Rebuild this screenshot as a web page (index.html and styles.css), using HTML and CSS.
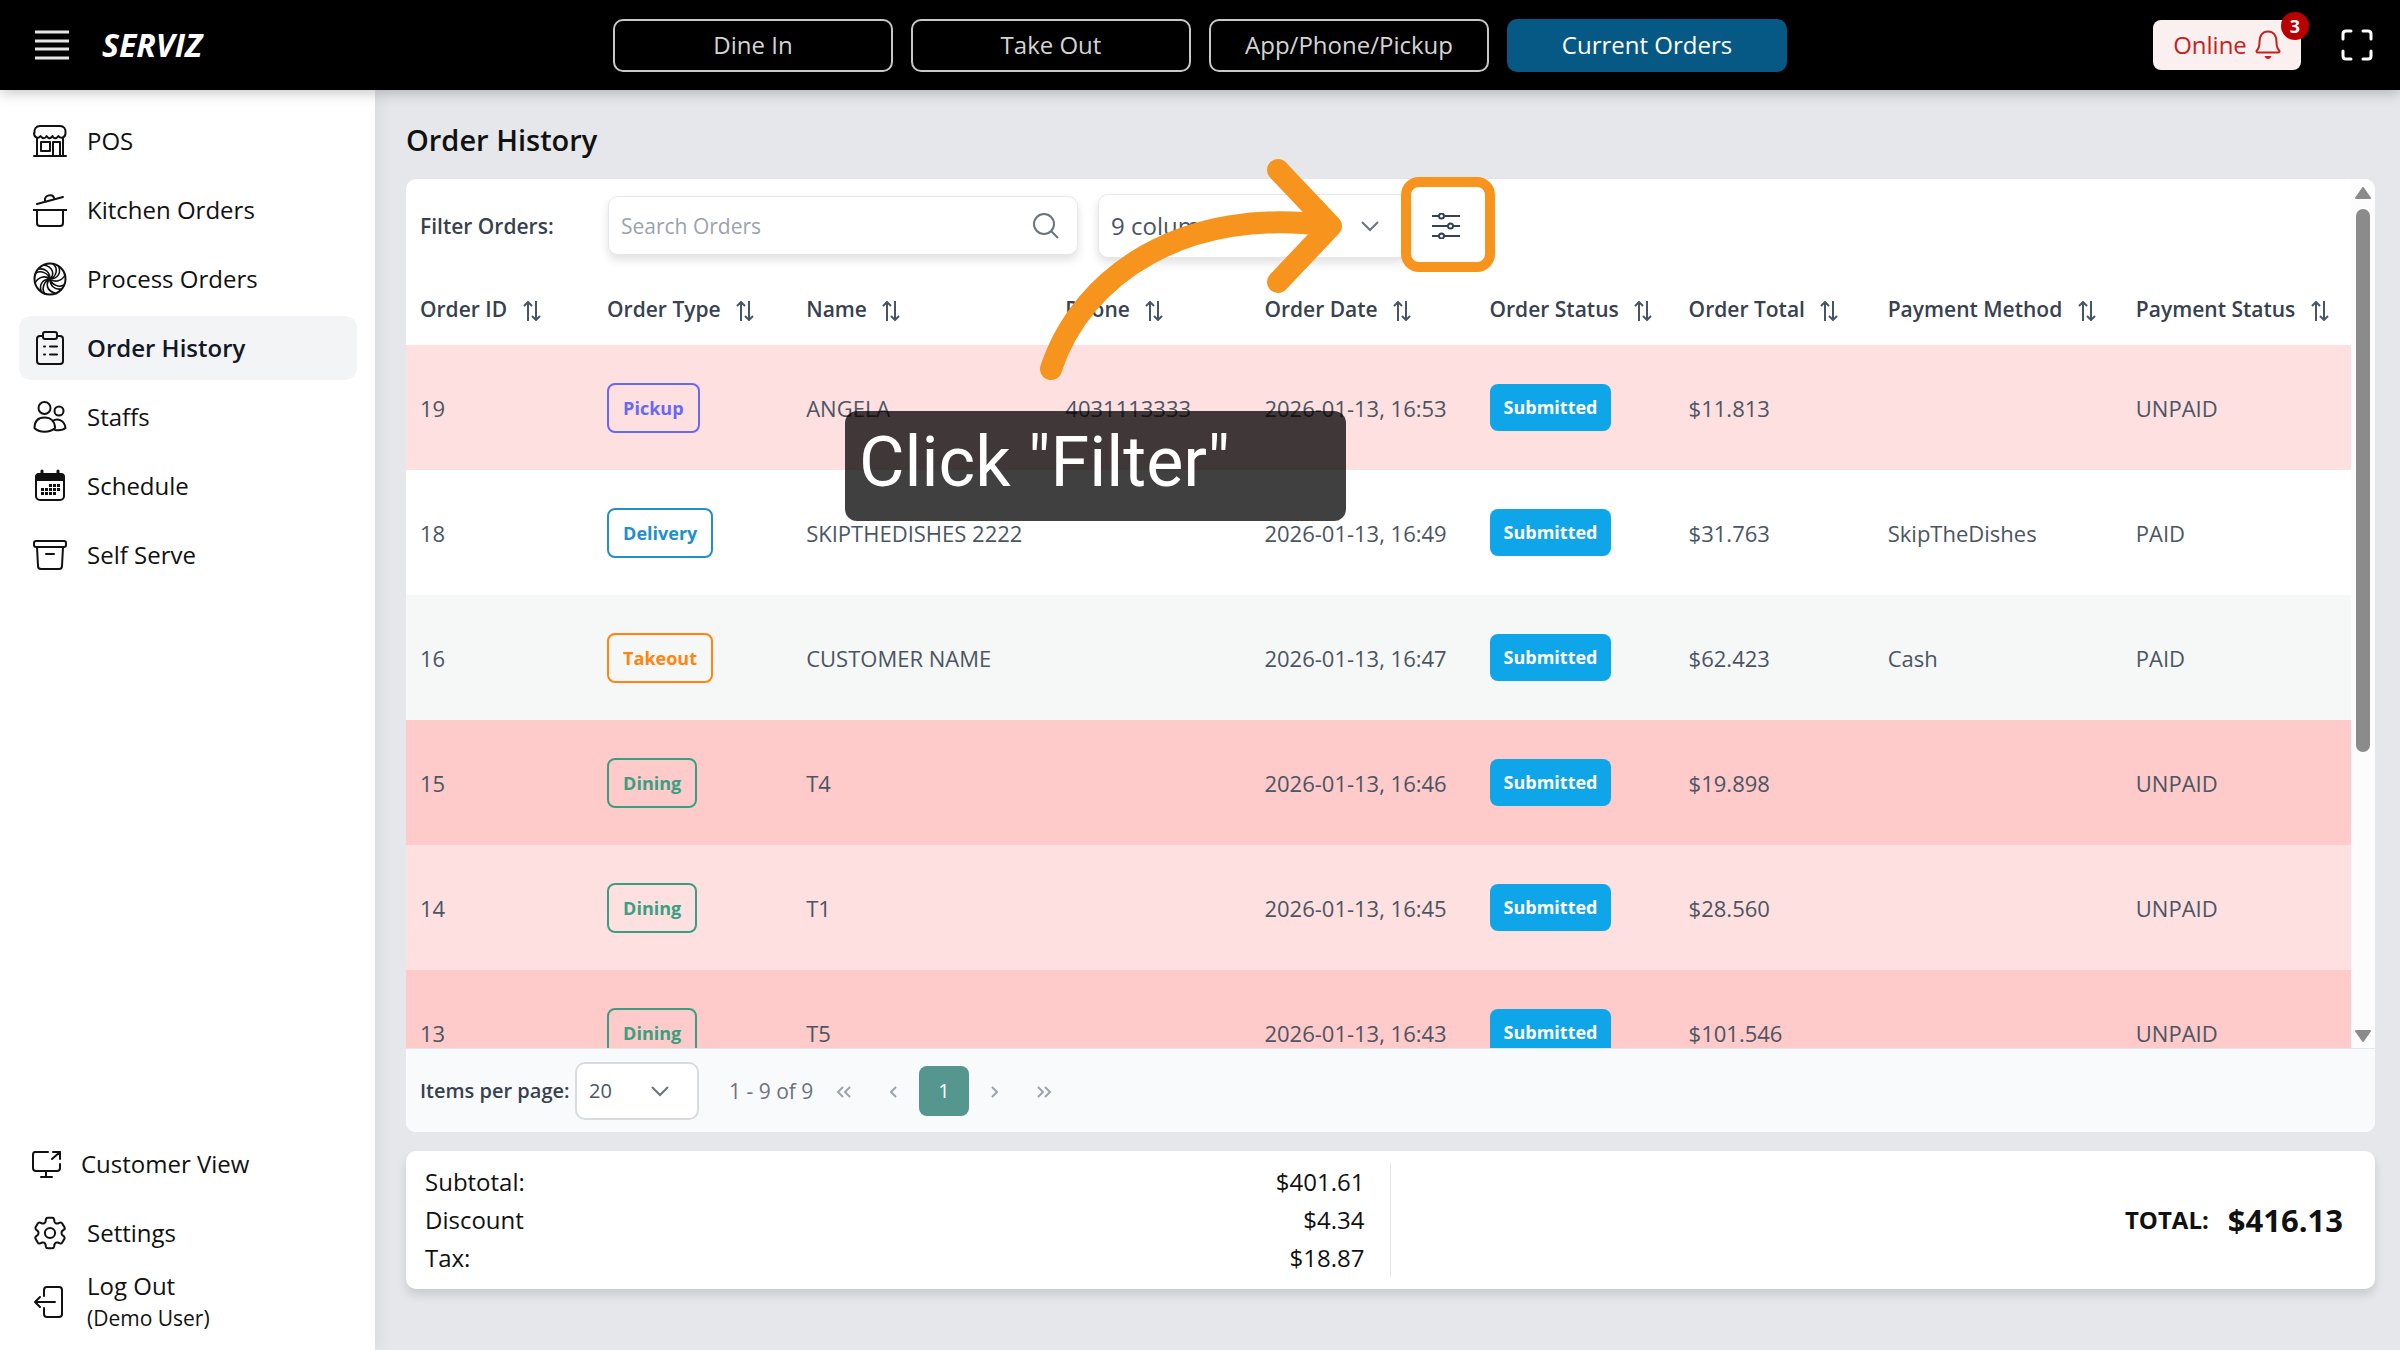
FILE: index.html
```html
<!DOCTYPE html>
<html lang="en">
<head>
    <meta charset="UTF-8">
    <meta name="viewport" content="width=device-width, initial-scale=1.0">
    <title>Order History - Serviz</title>
    <link rel="stylesheet" href="styles.css">
</head>
<body>
    <!-- shared icons -->
    <svg class="sprite" aria-hidden="true">
        <symbol id="sort" viewBox="0 0 18 20">
            <path d="M5 20V1M1 5l4-4 4 4M13 0v19M9 15l4 4 4-4"/>
        </symbol>
        <symbol id="chevron" viewBox="0 0 18 12">
            <path d="M1 2l8 8 8-8"/>
        </symbol>
    </svg>

    <header class="topbar">
        <div class="brand">
            <button class="icon-btn" aria-label="Menu">
                <svg width="34" height="30" viewBox="0 0 34 30"><path d="M0 2h34M0 11h34M0 19h34M0 28h34"/></svg>
            </button>
            <a href="#" class="logo">SERVIZ</a>
        </div>
        <nav class="modes">
            <button>Dine In</button>
            <button>Take Out</button>
            <button>App/Phone/Pickup</button>
            <button class="active">Current Orders</button>
        </nav>
        <div class="tools">
            <button class="online">
                Online
                <svg width="26" height="30" viewBox="0 0 26 30"><path d="M1.500 21c2-2 3-4 3-9C4.500 5 8 1.500 13 1.500S21.500 5 21.500 12c0 5 1 7 3 9q0 1.500-1.500 1.500H3Q1.500 22.500 1.500 21z"/><path class="clapper" d="M9.500 26h7q-1 3-3.500 3t-3.500-3z"/></svg>
                <span class="count">3</span>
            </button>
            <button class="icon-btn" aria-label="Full screen">
                <svg width="32" height="32" viewBox="0 0 32 32"><path d="M2 10V5q0-3 3-3h5M22 2h5q3 0 3 3v5M30 22v5q0 3-3 3h-5M10 30H5q-3 0-3-3v-5"/></svg>
            </button>
        </div>
    </header>

    <div class="layout">
        <aside class="sidebar">
            <nav class="menu">
                <a href="#">
                    <svg viewBox="0 0 34 34"><path d="M1.500 9C1 5 3 2 7 2h20c4 0 6 3 5.500 7 0 5-5 6-7 3-2 3-5 3-6 0-2 3-4 3-6 0-1 3-4 3-6 0-2 3-6.500 2-6.500-3zM4 14v18M30 14v18M1 32h32M8 18h9v9H8zM20 32V18h7v14"/></svg>
                    POS
                </a>
                <a href="#">
                    <svg viewBox="0 0 34 34"><path d="M4 11l26-7M12 8c-1-6 8-8 9-3M0 17h34M4 17v13q0 3 3 3h20q3 0 3-3V17"/></svg>
                    Kitchen Orders
                </a>
                <a href="#">
                    <svg viewBox="0 0 34 34"><circle cx="17" cy="17" r="15.500"/><path d="M17 17C22 12 20 5 11 3M17 17C23 15 26 7 20 2M17 17c7 0 11-5 9-12M17 17c5 4 12 2 15-4M17 17c2 6 9 9 14 6M17 17c0 7 5 11 11 10M17 17c-5 5-3 12 5 14M17 17c-6 2-9 10-5 15M17 17c-7 0-11 5-9 12M17 17c-5-4-12-2-15 4M17 17C15 11 8 8 3 11M17 17C17 10 12 6 6 7" stroke-width="1.600"/></svg>
                    Process Orders
                </a>
                <a href="#" class="active">
                    <svg viewBox="0 0 34 34"><path d="M10 5H7Q4 5 4 8v22q0 3 3 3h20q3 0 3-3V8q0-3-3-3h-3M12 1h10q2 0 2 2v3q0 2-2 2H12q-2 0-2-2V3q0-2 2-2zM11 15.500h1M17 15.500h7M11 23.500h1M17 23.500h7"/></svg>
                    Order History
                </a>
                <a href="#">
                    <svg viewBox="0 0 34 34"><circle cx="11.500" cy="8" r="6"/><circle cx="26" cy="11" r="4.500"/><path d="M1.500 28c0-7 4-10.500 10-10.500S22 21 22 28c-5 5-16 5-20.500 0zM19.500 21c5-3 12-1 13 7-2 2-6 2.500-10.500 2"/></svg>
                    Staffs
                </a>
                <a href="#">
                    <svg viewBox="0 0 34 34"><rect x="3" y="5" width="28" height="26" rx="4"/><path d="M3 11V8q0-3 3-3h22q3 0 3 3v3z" fill="#111"/><path d="M9 2v4M25 2v4" stroke-width="3"/><path class="dots" d="M16 16.500h11M8 20.500h19M8 24.500h15"/></svg>
                    Schedule
                </a>
                <a href="#">
                    <svg viewBox="0 0 34 34"><rect x="1" y="3" width="32" height="6" rx="2"/><path d="M4 9l1 19q0 3 3 3h18q3 0 3-3l1-19M13 16h8"/></svg>
                    Self Serve
                </a>
            </nav>
            <nav class="menu menu-bottom">
                <a href="#" class="tight">
                    <svg viewBox="0 0 34 34"><path d="M19 5H6Q4 5 4 8v13q0 3 3 3h21q3 0 3-3v-4M17 24v6M12 30h11M23 12l8-7M24 5h7v7"/></svg>
                    Customer View
                </a>
                <a href="#">
                    <svg viewBox="2 2 20 20" class="gear"><path d="M9.600 3.900c.1-.5.500-.9 1.100-.9h2.600c.6 0 1 .4 1.100.9l.2 1.300c.1.400.3.700.6.900l.3.200c.3.200.7.200 1.100.1l1.200-.5c.5-.2 1.100 0 1.400.5l1.300 2.200c.3.500.2 1.100-.3 1.400l-1 .8c-.3.300-.4.600-.4 1v.4c0 .4.100.7.400 1l1 .8c.4.400.5.900.3 1.400l-1.300 2.200c-.3.500-.9.700-1.400.5l-1.200-.5c-.4-.1-.8-.1-1.100.1l-.3.200c-.3.200-.5.500-.6.900l-.2 1.300c-.1.500-.5.900-1.100.9h-2.600c-.6 0-1-.4-1.100-.9l-.2-1.300c-.1-.4-.3-.7-.6-.9l-.3-.2c-.3-.2-.7-.2-1.100-.1l-1.200.5c-.5.200-1.100 0-1.400-.5L3.500 15.400c-.3-.5-.2-1.100.3-1.400l1-.8c.3-.3.400-.6.400-1v-.4c0-.4-.1-.7-.4-1l-1-.8c-.4-.4-.5-.9-.3-1.400l1.300-2.200c.3-.5.900-.7 1.400-.5l1.200.5c.4.100.8.100 1.100-.1l.3-.2c.3-.2.5-.5.600-.9z"/><circle cx="12" cy="12" r="3"/></svg>
                    Settings
                </a>
                <a href="#" class="logout">
                    <svg viewBox="0 0 34 34"><path d="M11 11V5q0-3 3-3h12q3 0 3 3v24q0 3-3 3H14q-3 0-3-3v-6M22 17H2M7 12l-5 5 5 5"/></svg>
                    <span>Log Out <small>(Demo User)</small></span>
                </a>
            </nav>
        </aside>

        <main>
            <h1>Order History</h1>
            <section class="card orders">
                <div class="scroll-area">
                    <div class="scroll-view">
                        <div class="filters">
                            <label for="search">Filter Orders:</label>
                            <div class="search">
                                <input type="text" id="search" placeholder="Search Orders">
                                <svg width="26" height="26" viewBox="0 0 26 26"><circle cx="11" cy="11" r="10"/><path d="M18 18l7 7"/></svg>
                            </div>
                            <div class="select columns">
                                <select aria-label="Columns"><option>9 columns</option></select>
                                <svg width="18" height="12"><use href="#chevron"/></svg>
                            </div>
                            <button class="filter-btn" aria-label="Filter">
                                <svg width="28" height="26" viewBox="0 0 28 26"><path d="M0 3h7M12 3h16M0 13h16M21 13h7M0 23h7M12 23h16"/><circle cx="9.500" cy="3" r="2.500"/><circle cx="18.500" cy="13" r="2.500"/><circle cx="9.500" cy="23" r="2.500"/></svg>
                            </button>
                        </div>
                        <table>
                            <colgroup>
                                <col class="c-id"><col class="c-md"><col class="c-name"><col class="c-md"><col class="c-date"><col class="c-md"><col class="c-md"><col class="c-method"><col class="c-pay">
                            </colgroup>
                            <thead>
                                <tr>
                                    <th>Order ID <svg><use href="#sort"/></svg></th>
                                    <th>Order Type <svg><use href="#sort"/></svg></th>
                                    <th>Name <svg><use href="#sort"/></svg></th>
                                    <th>Phone <svg><use href="#sort"/></svg></th>
                                    <th>Order Date <svg><use href="#sort"/></svg></th>
                                    <th>Order Status <svg><use href="#sort"/></svg></th>
                                    <th>Order Total <svg><use href="#sort"/></svg></th>
                                    <th>Payment Method <svg><use href="#sort"/></svg></th>
                                    <th>Payment Status <svg><use href="#sort"/></svg></th>
                                </tr>
                            </thead>
                            <tbody>
                                <tr class="unpaid">
                                    <td>19</td>
                                    <td><span class="tag pickup">Pickup</span></td>
                                    <td>ANGELA</td>
                                    <td>4031113333</td>
                                    <td>2026-01-13, 16:53</td>
                                    <td><span class="status">Submitted</span></td>
                                    <td>$11.813</td>
                                    <td></td>
                                    <td>UNPAID</td>
                                </tr>
                                <tr>
                                    <td>18</td>
                                    <td><span class="tag delivery">Delivery</span></td>
                                    <td>SKIPTHEDISHES 2222</td>
                                    <td></td>
                                    <td>2026-01-13, 16:49</td>
                                    <td><span class="status">Submitted</span></td>
                                    <td>$31.763</td>
                                    <td>SkipTheDishes</td>
                                    <td>PAID</td>
                                </tr>
                                <tr class="striped">
                                    <td>16</td>
                                    <td><span class="tag takeout">Takeout</span></td>
                                    <td>CUSTOMER NAME</td>
                                    <td></td>
                                    <td>2026-01-13, 16:47</td>
                                    <td><span class="status">Submitted</span></td>
                                    <td>$62.423</td>
                                    <td>Cash</td>
                                    <td>PAID</td>
                                </tr>
                                <tr class="unpaid striped">
                                    <td>15</td>
                                    <td><span class="tag dining">Dining</span></td>
                                    <td>T4</td>
                                    <td></td>
                                    <td>2026-01-13, 16:46</td>
                                    <td><span class="status">Submitted</span></td>
                                    <td>$19.898</td>
                                    <td></td>
                                    <td>UNPAID</td>
                                </tr>
                                <tr class="unpaid">
                                    <td>14</td>
                                    <td><span class="tag dining">Dining</span></td>
                                    <td>T1</td>
                                    <td></td>
                                    <td>2026-01-13, 16:45</td>
                                    <td><span class="status">Submitted</span></td>
                                    <td>$28.560</td>
                                    <td></td>
                                    <td>UNPAID</td>
                                </tr>
                                <tr class="unpaid striped">
                                    <td>13</td>
                                    <td><span class="tag dining">Dining</span></td>
                                    <td>T5</td>
                                    <td></td>
                                    <td>2026-01-13, 16:43</td>
                                    <td><span class="status">Submitted</span></td>
                                    <td>$101.546</td>
                                    <td></td>
                                    <td>UNPAID</td>
                                </tr>
                            </tbody>
                        </table>
                    </div>
                    <div class="scrollbar">
                        <svg width="16" height="12" viewBox="0 0 16 12"><path d="M8 1l7 10H1z"/></svg>
                        <div class="track"><div class="thumb"></div></div>
                        <svg width="16" height="12" viewBox="0 0 16 12"><path d="M8 11l7-10H1z"/></svg>
                    </div>
                </div>
                <div class="paginator">
                    <label for="per-page">Items per page:</label>
                    <div class="select per-page">
                        <select id="per-page"><option>20</option></select>
                        <svg width="18" height="12"><use href="#chevron"/></svg>
                    </div>
                    <span class="range">1 - 9 of 9</span>
                    <div class="pages">
                        <button aria-label="First page"><svg width="16" height="12" viewBox="0 0 16 12"><path d="M7 1L2 6l5 5M14 1L9 6l5 5"/></svg></button>
                        <button aria-label="Previous page"><svg width="8" height="12" viewBox="0 0 8 12"><path d="M6 1L1 6l5 5"/></svg></button>
                        <button class="current">1</button>
                        <button aria-label="Next page"><svg width="8" height="12" viewBox="0 0 8 12"><path d="M2 1l5 5-5 5"/></svg></button>
                        <button aria-label="Last page"><svg width="16" height="12" viewBox="0 0 16 12"><path d="M2 1l5 5-5 5M9 1l5 5-5 5"/></svg></button>
                    </div>
                </div>
            </section>

            <section class="card summary">
                <dl>
                    <div><dt>Subtotal:</dt><dd>$401.61</dd></div>
                    <div><dt>Discount</dt><dd>$4.34</dd></div>
                    <div><dt>Tax:</dt><dd>$18.87</dd></div>
                </dl>
                <p class="total">TOTAL: <span class="amount">$416.13</span></p>
            </section>

            <!-- walkthrough step -->
            <div class="spotlight"></div>
            <svg class="arrow" width="320" height="250" viewBox="0 0 320 250">
                <path d="M21 221C52 127 155 57 301 78M248 22l53 56-53 56"/>
            </svg>
            <div class="hint">Click "Filter"</div>
        </main>
    </div>
</body>
</html>
```

FILE: styles.css
```css
* { margin: 0; padding: 0; box-sizing: border-box; }
body {
    font-family: "Open Sans", "Noto Sans", sans-serif;
    font-size: 24px;
    line-height: 32px;
    color: #111;
    background: #e5e7eb;
    min-height: 100vh;
    display: flex;
    flex-direction: column;
}
button, input, select {
    font: inherit;
    color: inherit;
    background: none;
    border: none;
}
a { color: inherit; text-decoration: none; }
svg { flex: none; fill: none; stroke: #6b7280; stroke-width: 2; }
.sprite { display: none; }
/* symbols take their stroke from the svg that uses them */
symbol { stroke: inherit; }

/* top bar */
.topbar {
    display: grid;
    grid-template-columns: 1fr auto 1fr;
    align-items: center;
    height: 90px;
    padding: 0 27px;
    background: #000;
    color: #fff;
    box-shadow: 0 4px 12px rgba(0, 0, 0, 0.2);
    position: relative;
    z-index: 2;
}
.icon-btn { display: flex; }
.icon-btn svg { stroke: #fff; stroke-width: 3; stroke-linecap: round; }
.brand { display: flex; align-items: center; gap: 33px; padding-left: 8px; }
.brand svg { stroke: #e5e5e5; stroke-linecap: butt; }
.logo { font-size: 32px; font-weight: 700; font-style: italic; }
.modes { display: flex; gap: 18px; }
.modes button {
    width: 280px;
    height: 53px;
    border: 2px solid #c8c8c8;
    border-radius: 10px;
    color: #d4d4d4;
}
.modes .active {
    background: #075985;
    border-color: #075985;
    color: #fff;
}
.tools { display: flex; justify-content: flex-end; align-items: center; gap: 40px; }
.online {
    position: relative;
    display: flex;
    align-items: center;
    justify-content: center;
    gap: 8px;
    width: 148px;
    height: 50px;
    border-radius: 8px;
    background: #faf0f0;
    color: #c81e1e;
}
.online svg { stroke: #c81e1e; }
.online .clapper { fill: #c81e1e; stroke: none; }
.count {
    position: absolute;
    top: -8px;
    right: -8px;
    width: 28px;
    height: 28px;
    border-radius: 50%;
    background: #b80000;
    color: #fff;
    font-size: 18px;
    font-weight: 700;
    line-height: 28px;
}

.layout { display: flex; flex: 1; }

/* sidebar */
.sidebar {
    width: 375px;
    padding: 19px 18px 16px 19px;
    background: #fff;
    box-shadow: 4px 0 16px rgba(0, 0, 0, 0.06);
    display: flex;
    flex-direction: column;
    justify-content: space-between;
}
.menu { display: flex; flex-direction: column; gap: 5px; }
.menu a {
    display: flex;
    align-items: center;
    gap: 20px;
    min-height: 64px;
    padding: 0 14px;
    border-radius: 12px;
}
.menu .active { background: #f3f4f6; font-weight: 600; color: #111827; }
.menu svg {
    width: 34px;
    height: 34px;
    stroke: #111;
    stroke-linejoin: round;
    stroke-linecap: round;
}
.menu .gear { stroke-width: 1.2; }
.menu .dots { stroke-width: 3; stroke-dasharray: 3 1; stroke-linecap: butt; }
.menu .tight { padding-left: 10px; gap: 18px; }
.menu small { display: block; font-size: 21px; }

/* content */
main {
    flex: 1;
    min-width: 0;
    position: relative;
    padding: 30px 25px 0 31px;
}
h1 { font-size: 29px; font-weight: 600; line-height: 40px; margin-bottom: 19px; }
.card { background: #fff; border-radius: 10px; }
.orders { overflow: hidden; color: #4b5563; font-size: 22px; }
.scroll-area { display: flex; height: 869px; }
.scroll-view { flex: 1; overflow: hidden; }
.filters {
    display: flex;
    align-items: center;
    height: 93px;
    padding-left: 14px;
    font-size: 21px;
}
.filters label { width: 188px; font-weight: 600; color: #374151; }
.search, .select {
    display: flex;
    align-items: center;
    border: 1px solid #e5e7eb;
    border-radius: 10px;
    background: #fff;
    box-shadow: 0 5px 10px rgba(0, 0, 0, 0.12);
}
.search { width: 470px; height: 59px; margin-right: 20px; padding: 0 18px 0 12px; }
.search input { flex: 1; min-width: 0; height: 100%; font-weight: 500; }
.search input::placeholder { color: #9ca3af; }
.select { position: relative; }
.select select {
    appearance: none;
    width: 100%;
    height: 100%;
    padding: 0 12px;
}
.select svg { position: absolute; right: 28px; pointer-events: none; }
.columns { width: 310px; height: 64px; font-size: 24px; }
.filter-btn {
    display: flex;
    align-items: center;
    justify-content: center;
    width: 76px;
    height: 64px;
    background: #fff;
}
.filter-btn svg { stroke: #334155; }

table { width: 100%; table-layout: fixed; border-collapse: collapse; }
.c-id { width: 187px; }
.c-md { width: 199px; }
.c-name { width: 259px; }
.c-date { width: 225px; }
.c-method { width: 248px; }
.c-pay { width: 229px; }
th, td { padding: 0 0 0 14px; text-align: left; white-space: nowrap; }
th { height: 73px; font-size: 21px; font-weight: 600; color: #374151; }
th svg { width: 18px; height: 20px; margin-left: 10px; vertical-align: -4px; stroke: #475569; }
td { height: 125px; }
.striped { background: #f5f8f7; }
.unpaid { background: #fee0e0; }
.unpaid.striped { background: #fecaca; }
.tag, .status {
    display: inline-block;
    padding: 0 14px;
    border-radius: 8px;
    font-size: 18px;
    font-weight: 700;
}
.tag { border: 2px solid; line-height: 46px; }
.status { background: #0ea5e9; color: #fff; line-height: 47px; }
.pickup { color: #6668f6; }
.delivery { color: #238fca; }
.takeout { color: #ff850f; }
.dining { color: #3a9f82; }

.scrollbar {
    width: 24px;
    padding: 8px 0 6px;
    background: #fcfcfc;
    display: flex;
    flex-direction: column;
    align-items: center;
}
.scrollbar svg { fill: #8b8b8b; stroke: #8b8b8b; stroke-linejoin: round; }
.track { flex: 1; padding: 10px 0; }
.thumb { width: 14px; height: 67%; border-radius: 7px; background: #8b8b8b; }

.paginator {
    display: flex;
    align-items: center;
    height: 84px;
    padding-left: 14px;
    border-top: 1px solid #e5e7eb;
    background: #f9fafb;
    font-size: 20px;
}
.paginator label { width: 155px; font-weight: 600; color: #374151; white-space: nowrap; }
.per-page { width: 124px; height: 58px; border: 2px solid #d8dce1; box-shadow: none; }
.range { margin-left: 30px; width: 90px; white-space: nowrap; font-size: 21px; color: #6b7280; }
.pages { display: flex; }
.pages button { width: 50px; height: 50px; }
.pages svg { stroke: #9ca3af; }
.pages .current { border-radius: 8px; background: #55978e; color: #fff; }

.summary {
    display: flex;
    margin-top: 19px;
    padding: 12px 0;
    box-shadow: 0 6px 10px rgba(0, 0, 0, 0.12);
}
.summary dl { width: 50%; padding: 0 25px 0 19px; border-right: 1px solid #e5e7eb; }
.summary dl div { display: flex; justify-content: space-between; line-height: 38px; }
.total {
    flex: 1;
    display: flex;
    align-items: center;
    justify-content: flex-end;
    gap: 19px;
    padding-right: 32px;
    font-weight: 700;
}
.amount { font-size: 31px; }

/* walkthrough overlay */
.spotlight {
    position: absolute;
    left: 1026px;
    top: 87px;
    width: 94px;
    height: 95px;
    border: 10px solid #f7941d;
    border-radius: 18px;
}
.arrow { position: absolute; left: 655px; top: 58px; }
.arrow path {
    stroke: #f7941d;
    stroke-width: 22;
    stroke-linecap: round;
    stroke-linejoin: round;
}
.hint {
    position: absolute;
    left: 470px;
    top: 321px;
    width: 501px;
    height: 110px;
    padding-left: 14px;
    border-radius: 12px;
    background: rgba(0, 0, 0, 0.75);
    color: #fff;
    font: 400 70px/102px Roboto, sans-serif;
}
```
